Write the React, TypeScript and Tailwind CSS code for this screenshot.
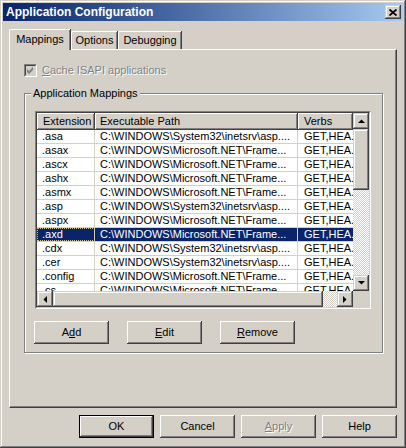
import React from 'react';

type Row = { ext: string; path: string };

const SYS = 'C:\\WINDOWS\\System32\\inetsrv\\asp....';
const NET = 'C:\\WINDOWS\\Microsoft.NET\\Frame...';

const ROWS: Row[] = [
  { ext: '.asa', path: SYS },
  { ext: '.asax', path: NET },
  { ext: '.ascx', path: NET },
  { ext: '.ashx', path: NET },
  { ext: '.asmx', path: NET },
  { ext: '.asp', path: SYS },
  { ext: '.aspx', path: NET },
  { ext: '.axd', path: NET },
  { ext: '.cdx', path: SYS },
  { ext: '.cer', path: SYS },
  { ext: '.config', path: NET },
  { ext: '.cs', path: NET },
];

const SELECTED = '.axd';

// classic 3d edges
const raised =
  'shadow-[inset_-1px_-1px_0_#404040,inset_1px_1px_0_#fff,inset_-2px_-2px_0_#808080]';
const scrollBtn =
  'shadow-[inset_-1px_-1px_0_#404040,inset_1px_1px_0_#d4d0c8,inset_-2px_-2px_0_#808080,inset_2px_2px_0_#fff]';
const checker =
  'bg-[image:repeating-conic-gradient(#fff_0_25%,#d4d0c8_0_50%)] bg-[length:2px_2px]';

function Arrow({ dir }: { dir: 'up' | 'down' | 'left' | 'right' }) {
  const vertical = dir === 'up' || dir === 'down';
  const points = {
    up: '0,4 7,4 3.5,0.5',
    down: '0,0 7,0 3.5,3.5',
    left: '4,0 4,7 0.5,3.5',
    right: '0,0 0,7 3.5,3.5',
  }[dir];
  return (
    <svg width={vertical ? 7 : 4} height={vertical ? 4 : 7} viewBox={vertical ? '0 0 7 4' : '0 0 4 7'}>
      <polygon points={points} fill="#000" />
    </svg>
  );
}

function ScrollButton({ dir }: { dir: 'up' | 'down' | 'left' | 'right' }) {
  return (
    <div className={`w-[16px] h-[16px] shrink-0 bg-[#d4d0c8] flex items-center justify-center ${scrollBtn}`}>
      <Arrow dir={dir} />
    </div>
  );
}

function PushButton({
  children,
  isDefault,
  disabled,
}: {
  children: React.ReactNode;
  isDefault?: boolean;
  disabled?: boolean;
}) {
  const edge = isDefault
    ? 'shadow-[inset_0_0_0_1px_#000,inset_-2px_-2px_0_#404040,inset_2px_2px_0_#fff,inset_-3px_-3px_0_#808080]'
    : raised;
  return (
    <div
      className={`w-[75px] h-[23px] flex items-center justify-center bg-[#d4d0c8] ${edge} ${
        disabled ? 'text-[#808080] [text-shadow:1px_1px_0_#fff]' : 'text-black'
      }`}
    >
      {children}
    </div>
  );
}

function ListView() {
  return (
    <div className="w-[336px] h-[198px] border border-t-[#808080] border-l-[#808080] border-b-white border-r-white">
      <div className="w-full h-full flex flex-col border border-t-[#404040] border-l-[#404040] border-b-[#d4d0c8] border-r-[#d4d0c8] bg-white">
        <div className="flex h-[178px]">
          {/* Columns */}
          <div className="flex-1 flex flex-col overflow-hidden">
            <div className="flex h-[17px] shrink-0">
              <div className={`w-[58px] shrink-0 bg-[#d4d0c8] pl-[6px] flex items-center ${raised}`}>Extension</div>
              <div className={`w-[203px] shrink-0 bg-[#d4d0c8] pl-[5px] flex items-center ${raised}`}>Executable Path</div>
              <div className={`flex-1 bg-[#d4d0c8] pl-[6px] flex items-center ${raised}`}>Verbs</div>
            </div>
            {ROWS.map((r) => {
              const sel = r.ext === SELECTED;
              return (
                <div
                  key={r.ext}
                  className={`flex h-[14px] shrink-0 border-b border-[#d4d0c8] ${
                    sel ? 'bg-[#0a246a] text-white' : 'text-black'
                  }`}
                >
                  <div
                    className={`w-[58px] shrink-0 pl-[5px] leading-[13px] border-r border-[#d4d0c8] whitespace-nowrap overflow-hidden ${
                      sel ? 'outline-1 outline-dotted outline-[#c8c090] -outline-offset-1' : ''
                    }`}
                  >
                    {r.ext}
                  </div>
                  <div className="w-[203px] shrink-0 pl-[5px] leading-[13px] border-r border-[#d4d0c8] whitespace-nowrap overflow-hidden">
                    {r.path}
                  </div>
                  <div className="flex-1 pl-[6px] leading-[13px] whitespace-nowrap">GET,HEA.</div>
                </div>
              );
            })}
          </div>
          {/* Vertical scrollbar */}
          <div className="w-[16px] shrink-0 flex flex-col bg-[#d4d0c8]">
            <ScrollButton dir="up" />
            <div className={`h-[61px] shrink-0 bg-[#d4d0c8] ${scrollBtn}`} />
            <div className={`flex-1 ${checker}`} />
            <ScrollButton dir="down" />
          </div>
        </div>
        {/* Horizontal scrollbar */}
        <div className="flex h-[16px] shrink-0">
          <ScrollButton dir="left" />
          <div className={`w-[270px] shrink-0 bg-[#d4d0c8] ${scrollBtn}`} />
          <div className={`flex-1 ${checker}`} />
          <ScrollButton dir="right" />
          <div className="w-[16px] shrink-0 bg-[#d4d0c8]" />
        </div>
      </div>
    </div>
  );
}

export default function App() {
  return (
    <div className="w-[406px] h-[448px] bg-[#d4d0c8] p-[3px] flex flex-col font-['Liberation_Sans',Arial,sans-serif] text-[11px] text-black shadow-[inset_-1px_-1px_0_#404040,inset_1px_1px_0_#d4d0c8,inset_-2px_-2px_0_#808080,inset_2px_2px_0_#fff]">
      {/* Title bar */}
      <div className="h-[18px] shrink-0 flex items-center justify-between pl-[3px] pr-[2px] bg-gradient-to-r from-[#0a246a] to-[#a6caf0]">
        <span className="text-white font-bold text-[12px] leading-none">Application Configuration</span>
        <div className={`w-[16px] h-[14px] bg-[#d4d0c8] flex items-center justify-center ${scrollBtn}`}>
          <svg width="8" height="7" viewBox="0 0 8 7">
            <path d="M0.5 0.5 L7.5 6.5 M7.5 0.5 L0.5 6.5" stroke="#000" strokeWidth="1.7" />
          </svg>
        </div>
      </div>

      {/* Tabs */}
      <div className="mt-[8px] ml-[6px] h-[20px] flex items-end">
        <div className="relative z-10 w-[61px] h-[21px] -mb-px bg-[#d4d0c8] border-l border-t border-white rounded-tl-[2px] shadow-[inset_-1px_0_0_#808080,1px_0_0_#404040] flex items-center justify-center pb-[2px]">
          Mappings
        </div>
        <div className="w-[46px] h-[18px] ml-px bg-[#d4d0c8] border-l border-t border-white rounded-tl-[2px] shadow-[inset_-1px_0_0_#808080,1px_0_0_#404040] flex items-center justify-center">
          Options
        </div>
        <div className="w-[63px] h-[18px] ml-px bg-[#d4d0c8] border-l border-t border-white rounded-tl-[2px] shadow-[inset_-1px_0_0_#808080,1px_0_0_#404040] flex items-center justify-center">
          Debugging
        </div>
      </div>

      {/* Tab panel */}
      <div className="mx-[6px] h-[359px] shrink-0 border-l border-t border-white border-r border-b border-r-[#404040] border-b-[#404040] shadow-[inset_-1px_-1px_0_#808080] pl-[14px] pt-[14px] flex flex-col">
        <div className="flex items-center h-[13px]">
          <div className="w-[13px] h-[13px] border border-t-[#808080] border-l-[#808080] border-b-white border-r-white">
            <div className="w-full h-full border border-t-[#404040] border-l-[#404040] border-b-[#d4d0c8] border-r-[#d4d0c8] bg-[#d4d0c8]">
              <svg width="9" height="9" viewBox="0 0 9 9" className="block">
                <polygon points="1,3 3,5 7,1 7,4 3,8 1,6" fill="#808080" />
              </svg>
            </div>
          </div>
          <span className="ml-[5px] text-[#808080] [text-shadow:1px_1px_0_#fff]">
            <u>C</u>ache ISAPI applications
          </span>
        </div>

        {/* Group box */}
        <div className="relative mt-[16px] w-[359px] h-[260px] border border-[#808080] shadow-[1px_1px_0_#fff,inset_1px_1px_0_#fff] pl-[10px] pt-[17px] flex flex-col">
          <span className="absolute left-[6px] top-[-7px] px-[2px] bg-[#d4d0c8] leading-[13px]">Application Mappings</span>
          <ListView />
          <div className="flex gap-[18px] mt-[12px] -ml-px">
            <PushButton>
              A<u>d</u>d
            </PushButton>
            <PushButton>
              <u>E</u>dit
            </PushButton>
            <PushButton>
              <u>R</u>emove
            </PushButton>
          </div>
        </div>
      </div>

      {/* Dialog buttons */}
      <div className="mt-[7px] pr-[6px] flex justify-end gap-[6px]">
        <PushButton isDefault>OK</PushButton>
        <PushButton>Cancel</PushButton>
        <PushButton disabled>
          <u>A</u>pply
        </PushButton>
        <PushButton>Help</PushButton>
      </div>
    </div>
  );
}
